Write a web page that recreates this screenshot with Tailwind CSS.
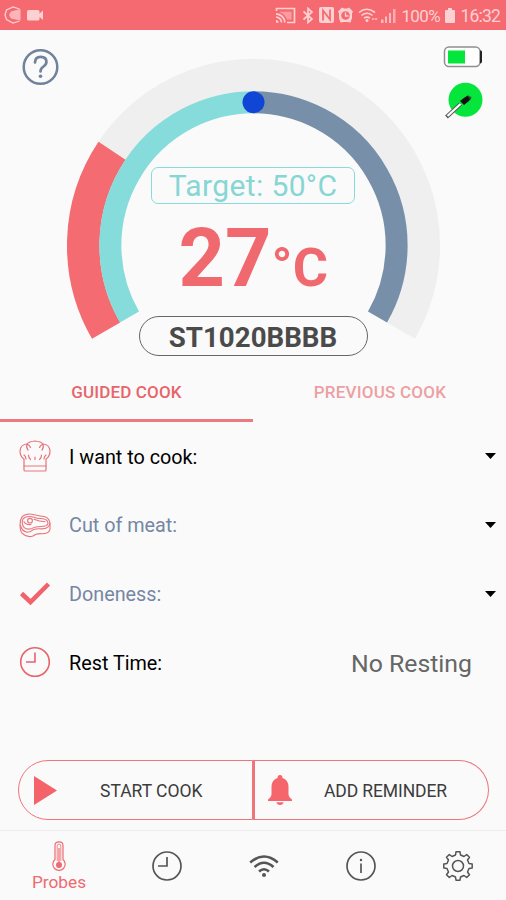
<!DOCTYPE html>
<html lang="en">
<head>
  <meta charset="UTF-8">
  <meta name="viewport" content="width=device-width, initial-scale=1.0">
  <title>Probes</title>
  <script src="https://cdn.jsdelivr.net/npm/@tailwindcss/browser@4"></script>
</head>
<body class="bg-[#fafafa] font-['Roboto',sans-serif] w-[506px] h-[900px] overflow-hidden flex flex-col">

  <!-- Status bar -->
  <header class="h-[30px] shrink-0 bg-[#f56a70] text-[#fdd0d2] flex items-center justify-between pl-1 pr-[6px]">
    <div class="flex items-center gap-[5px]">
      <svg class="w-[18px] h-[18px]" viewBox="0 0 18 18" fill="none" stroke="currentColor">
        <path d="M15.500 3 L9 1 L2.500 4 L1 9 L2.500 13.500 L9 17 L15.500 15" stroke-width="1.300"/>
        <path d="M7 5.500 L16.500 3 V14.500 L7 12.500 L5 9 Z" fill="currentColor" fill-opacity=".75" stroke="none"/>
      </svg>
      <svg class="w-[17px] h-[12px]" viewBox="0 0 17 12" fill="currentColor">
        <rect x="0" y="1" width="12.500" height="10.500" rx="1.500"/>
        <path d="M12 5 L16 1.500 V11 L12 7.500 Z"/>
      </svg>
    </div>
    <div class="flex items-center">
      <svg class="w-[21px] h-[17px]" viewBox="0 0 21 17" fill="none" stroke="currentColor" stroke-width="1.700">
        <path d="M1.500 4 V1.500 H19.500 V15.500 H12"/>
        <path d="M1 6.800 A9 9 0 0 1 9.800 15.600 M1 10 A5.700 5.700 0 0 1 6.500 15.600"/>
        <path d="M1 13 A2.800 2.800 0 0 1 3.600 15.800 H1 Z" fill="currentColor" stroke="none"/>
        <path d="M5 4.800 H16.500 V12.500 H12 Q10 7 5 5.500 Z" fill="currentColor" fill-opacity=".5" stroke="none"/>
      </svg>
      <svg class="w-[12px] h-[17px] ml-[6px]" viewBox="0 0 12 17" fill="none" stroke="currentColor" stroke-width="1.700">
        <path d="M1.500 4.500 L10 12 L6 15.500 V1.500 L10 5 L1.500 12.500"/>
      </svg>
      <svg class="w-[15px] h-[16px] ml-[5px]" viewBox="0 0 15 16">
        <rect width="15" height="16" rx="2" fill="currentColor"/>
        <path d="M4 13.500 V3.500 L11 12.500 V2.500" fill="none" stroke="#f56a70" stroke-width="1.800"/>
      </svg>
      <svg class="w-[15px] h-[16px] ml-[4px]" viewBox="0 0 15 16">
        <path d="M0 4.500 L4 .5 L6 1.500 H9 L11 .5 L15 4.500 L14 6.500 V11 L12.500 15.500 L9 15 H6 L2.500 15.500 L1 11 V6.500 Z" fill="currentColor"/>
        <circle cx="7.500" cy="8.500" r="4.300" fill="#f56a70"/>
        <path d="M7.500 5.500 V9 H10.500" fill="none" stroke="currentColor" stroke-width="1.400"/>
      </svg>
      <svg class="w-[20px] h-[15px] ml-[5px]" viewBox="0 0 20 15" fill="none" stroke="currentColor" stroke-width="1.600">
        <path d="M1 4.500 Q8.500 -2 17 4.500 M3.500 7.500 Q9 3 14.500 7.500 M6 10.200 Q9 8 12 10.200"/>
        <circle cx="9" cy="12.500" r="1.500" fill="currentColor" stroke="none"/>
        <path d="M14 12 L15 10 L16 12 M17 10 L18 12 L19 10" stroke-width=".8"/>
      </svg>
      <svg class="w-[15px] h-[15px] ml-[3px]" viewBox="0 0 15 15" fill="currentColor">
        <path d="M0 11.500 H2.500 V15 H0 Z M4 8.500 H6 V15 H4 Z M8 5 H10 V15 H8 Z" fill-opacity=".8"/>
        <path d="M12 1 H14.500 V15 H12 Z" fill-opacity=".65"/>
      </svg>
      <span class="ml-[5px] w-[38px] pt-[2px] text-[17px] leading-none tracking-[-0.6px]">100%</span>
      <svg class="w-[10px] h-[15px] ml-[6px]" viewBox="0 0 10 15" fill="currentColor">
        <path d="M3 0 H7 V2 H9 Q10 2 10 3 V14 Q10 15 9 15 H1 Q0 15 0 14 V3 Q0 2 1 2 H3 Z"/>
      </svg>
      <span class="ml-[5px] pt-[3px] text-[17.500px] leading-none tracking-[-0.8px]">16:32</span>
    </div>
  </header>

  <!-- Temperature gauge -->
  <section class="relative h-[332px] shrink-0">
    <svg class="absolute inset-0 w-[506px] h-[332px]" viewBox="0 30 506 332" fill="none">
      <path d="M106.100 330.700 A170.300 170.300 0 1 1 400.900 330.700" stroke="#efefef" stroke-width="32.500"/>
      <path d="M106.100 330.700 A170.300 170.300 0 0 1 112 150.800" stroke="#f46b71" stroke-width="32.500"/>
      <path d="M129.500 317 A143.200 143.200 0 0 1 253.500 102.300" stroke="#86dcda" stroke-width="22"/>
      <path d="M253.500 102.300 A143.200 143.200 0 0 1 377.500 317" stroke="#778fa9" stroke-width="22"/>
      <circle cx="253.500" cy="102.300" r="11" fill="#1045d5"/>

      <!-- help -->
      <g stroke="#70829c">
        <circle cx="40.500" cy="67" r="16.800" stroke-width="2.500"/>
        <path d="M35 62.500 Q35 56.800 40.700 56.800 Q46.400 56.800 46.400 61.800 Q46.400 64.500 43.500 66.500 Q40.500 68.500 40.500 71.500" stroke-width="2.700" stroke-linecap="round"/>
        <circle cx="40.500" cy="76.300" r="1.800" fill="#70829c" stroke="none"/>
      </g>

      <!-- probe battery -->
      <rect x="444.500" y="47" width="35.500" height="19.500" rx="4.500" fill="#fff" stroke="#8f8f8f" stroke-width="1.500"/>
      <rect x="448" y="50.500" width="17" height="13" fill="#05e63c"/>
      <path d="M480 50.500 H481 Q482 50.500 482 52 V61.500 Q482 63.500 480 63.500 Z" fill="#222"/>

      <!-- probe status -->
      <circle cx="465.500" cy="99.800" r="17" fill="#05e63c"/>
      <path d="M446.500 117 L460.500 104" stroke="#555" stroke-width="4"/>
      <path d="M447.500 116 L460.500 104" stroke="#fff" stroke-width="2.200"/>
      <path d="M460 101 L464.500 97.500 L468 95.500 L471 98 L469 101 L464 105 Z" fill="#111"/>
      <path d="M467 95.500 L471.500 97 L470.500 100 Z" fill="#3c4a3c"/>
    </svg>
    <div class="relative flex flex-col items-center pt-[137px]">
      <div class="w-[204px] h-[37px] rounded-[7px] border border-[#86dcda] text-[#86d6d4] text-[30px] leading-[35px] tracking-[0.38px] text-center whitespace-nowrap">Target: 50°C</div>
      <div class="mt-[14px] h-[82px] pl-[1px] flex items-baseline text-[#f0696f] font-bold leading-[82px] whitespace-nowrap">
        <span class="text-[81px]">27</span><span class="text-[54px] tracking-[0.3px]">°C</span>
      </div>
      <div class="mt-[16px] w-[229px] h-[40px] rounded-full border border-[#666] text-[#4a4a4a] text-[27.700px] leading-[41px] font-bold text-center">ST1020BBBB</div>
    </div>
  </section>

  <!-- Tabs -->
  <nav class="h-[59px] shrink-0 grid grid-cols-2 text-[17px] font-medium text-center leading-[56px]">
    <div class="h-[60px] pt-[2px] text-[#e8646b] border-b-3 border-[#ea7a81] tracking-[0.15px]">GUIDED COOK</div>
    <div class="h-[60px] pt-[2px] pl-[1px] text-[#eca0a3] tracking-[0.22px]">PREVIOUS COOK</div>
  </nav>

  <!-- Cook settings -->
  <main class="h-[278px] shrink-0 pt-[1px] text-[19.800px] text-black">
    <div class="h-[68.700px] flex items-center pl-[19px] pr-[10px]">
      <svg class="w-[32px] h-[32px]" viewBox="0 0 32 32" fill="none" stroke="#e8747b" stroke-width="1.200" stroke-linecap="round" stroke-linejoin="round">
        <path d="M5 30 V19 Q1 16.500 1 11 Q1.500 4.500 8 4 Q10 1.500 16 1 Q22 1.500 24 4 Q30.500 4.500 31 11 Q31 16.500 27 19 V30 Q27 31 26 31 H6 Q5 31 5 30 Z"/>
        <path d="M5 26 H27 M8 4 Q10.500 5 11.500 7.500 M24 4 Q21.500 5 20.500 7.500 M8 4 Q7 8 9 10 M24 4 Q25 8 23 10 M9.500 15 Q9.500 18 11.500 19.500 M22.500 15 Q22.500 18 20.500 19.500 M16 17 V19.500 M5 15 Q7 16.500 7 19 M27 15 Q25 16.500 25 19"/>
      </svg>
      <span class="ml-[18px] pt-[2px] flex-1">I want to cook:</span>
      <svg class="w-[11px] h-[6px]" viewBox="0 0 11 6"><path d="M0 0 H11 L5.500 6 Z" fill="#000"/></svg>
    </div>
    <div class="h-[68.700px] flex items-center pl-[19px] pr-[10px] text-[#7587a3]">
      <svg class="w-[32px] h-[25px]" viewBox="0 0 32 26" preserveAspectRatio="none" fill="none" stroke="#e8747b" stroke-width="1.100" stroke-linecap="round" stroke-linejoin="round">
        <path d="M3 4 Q7 0 14 1.500 Q20 3 26 4 Q31 6 31 12 V17 Q30 21.500 23 21.500 Q17 21 14 24 Q8 26 3 21 Q1 18 1 12 Q1 7 3 4 Z"/>
        <path d="M1.500 13 Q3 19 8 20 Q11 20 14 17.500 Q17 16 23 16.500 Q30 16 31 11"/>
        <path d="M4 6 Q8 2.500 13 4 Q18 6 24 6 Q29 7 29 11 Q28 14 22 14 Q16 14 13 16 Q8 18 5 15 Q2 11 4 6 Z"/>
        <circle cx="11" cy="8" r="2.400"/>
        <path d="M5 9 Q7 12.500 12 12 M15 6.500 Q20 9 26 9"/>
      </svg>
      <span class="ml-[18px] pt-[2px] flex-1">Cut of meat:</span>
      <svg class="w-[11px] h-[6px]" viewBox="0 0 11 6"><path d="M0 0 H11 L5.500 6 Z" fill="#000"/></svg>
    </div>
    <div class="h-[68.700px] flex items-center pl-[19px] pr-[10px] text-[#7587a3]">
      <svg class="w-[32px] h-[24px]" viewBox="0 0 32 24"><path d="M2.500 11.500 L11.500 20 L29.500 2" fill="none" stroke="#f0636a" stroke-width="4.500"/></svg>
      <span class="ml-[18px] pt-[2px] flex-1">Doneness:</span>
      <svg class="w-[11px] h-[6px]" viewBox="0 0 11 6"><path d="M0 0 H11 L5.500 6 Z" fill="#000"/></svg>
    </div>
    <div class="h-[68.700px] flex items-center pl-[19px] pr-[34px]">
      <svg class="w-[32px] h-[32px]" viewBox="0 0 32 32" fill="none" stroke="#e8646b" stroke-width="1.600">
        <circle cx="16" cy="16" r="14.300"/>
        <path d="M16 6.500 V16 H7"/>
      </svg>
      <span class="ml-[18px] pt-[2px] flex-1">Rest Time:</span>
      <span class="pt-[2px] text-[24.800px] text-[#666]">No Resting</span>
    </div>
  </main>

  <!-- Actions -->
  <div class="mt-[61px] ml-[18px] mr-[17px] h-[60px] shrink-0 grid grid-cols-[235px_236px] text-[17.500px] text-[#3c3c3c]">
    <div class="border-[1.500px] border-[#ee757a] rounded-l-full flex items-center pl-[15px]">
      <svg class="w-[23px] h-[29px]" viewBox="0 0 23 29"><path d="M0 0 L23 14.500 L0 29 Z" fill="#f5636a"/></svg>
      <span class="ml-[43px] pt-[2px]">START COOK</span>
    </div>
    <div class="border-[1.500px] border-l-2 border-[#ee757a] rounded-r-full flex items-center pl-[13px]">
      <svg class="w-[24px] h-[30px]" viewBox="0 0 24 30" fill="#f5666c">
        <path d="M12 0 Q14.500 0 14.500 3 Q20.500 5 20.500 12 V19 Q20.500 22 24 24.500 V26 H0 V24.500 Q3.500 22 3.500 19 V12 Q3.500 5 9.500 3 Q9.500 0 12 0 Z"/>
        <path d="M8.500 27.300 H15.500 Q15 30 12 30 Q9 30 8.500 27.300 Z"/>
      </svg>
      <span class="ml-[32px] pt-[2px] tracking-[-0.1px]">ADD REMINDER</span>
    </div>
  </div>

  <!-- Bottom navigation -->
  <footer class="mt-[10px] h-[70px] shrink-0 border-t border-[#ececec] grid grid-cols-[118px_98px_96px_97px_97px] text-[#555]">
    <div class="flex flex-col items-center pt-[10px] text-[#ee6a70]">
      <svg class="w-[14px] h-[31px]" viewBox="0 0 14 31" fill="none" stroke="currentColor" stroke-width="1.200">
        <path d="M3 18.500 V4.500 Q3 .8 7 .8 Q11 .8 11 4.500 V18.500 A6.200 6.200 0 1 1 3 18.500 Z"/>
        <path d="M5.200 20 V5 Q5.200 3 7 3 Q8.800 3 8.800 5 V20" stroke-width=".8"/>
        <circle cx="7" cy="24" r="2.400" fill="currentColor"/>
        <path d="M7 7 V22" stroke-width="1.200"/>
      </svg>
      <span class="-mt-px text-[17.300px] leading-[22px]">Probes</span>
    </div>
    <div class="flex items-center justify-center">
      <svg class="w-[30px] h-[30px]" viewBox="0 0 30 30" fill="none" stroke="currentColor" stroke-width="1.700">
        <circle cx="15" cy="15" r="14"/>
        <path d="M15 6 V15 H6"/>
      </svg>
    </div>
    <div class="flex items-center justify-center">
      <svg class="w-[30px] h-[24px]" viewBox="0 0 30 24" fill="none" stroke="currentColor" stroke-width="2.600">
        <path d="M1.200 8.500 Q15 -3.500 28.800 8.500 M5.500 13 Q15 4.500 24.500 13 M10 17.500 Q15 13 20 17.500"/>
        <circle cx="15" cy="21" r="2" fill="currentColor" stroke="none"/>
      </svg>
    </div>
    <div class="flex items-center justify-center">
      <svg class="w-[30px] h-[30px]" viewBox="0 0 30 30" fill="none" stroke="currentColor" stroke-width="1.700">
        <circle cx="15" cy="15" r="14"/>
        <path d="M15 12.500 V22"/>
        <circle cx="15" cy="9" r="1.200" fill="currentColor" stroke="none"/>
      </svg>
    </div>
    <div class="flex items-center justify-center">
      <svg class="w-[30px] h-[30px]" viewBox="0 0 30 30" fill="none" stroke="currentColor" stroke-width="1.500" stroke-linejoin="round">
        <path d="M12.500 4 L13 .8 H17 L17.500 4 L21 5.500 L23.700 3.500 L26.500 6.300 L24.500 9 L26 12.500 L29.200 13 V17 L26 17.500 L24.500 21 L26.500 23.700 L23.700 26.500 L21 24.500 L17.500 26 L17 29.200 H13 L12.500 26 L9 24.500 L6.300 26.500 L3.500 23.700 L5.500 21 L4 17.500 L.8 17 V13 L4 12.500 L5.500 9 L3.500 6.300 L6.300 3.500 L9 5.500 Z"/>
        <circle cx="15" cy="15" r="5.500"/>
      </svg>
    </div>
  </footer>
</body>
</html>
